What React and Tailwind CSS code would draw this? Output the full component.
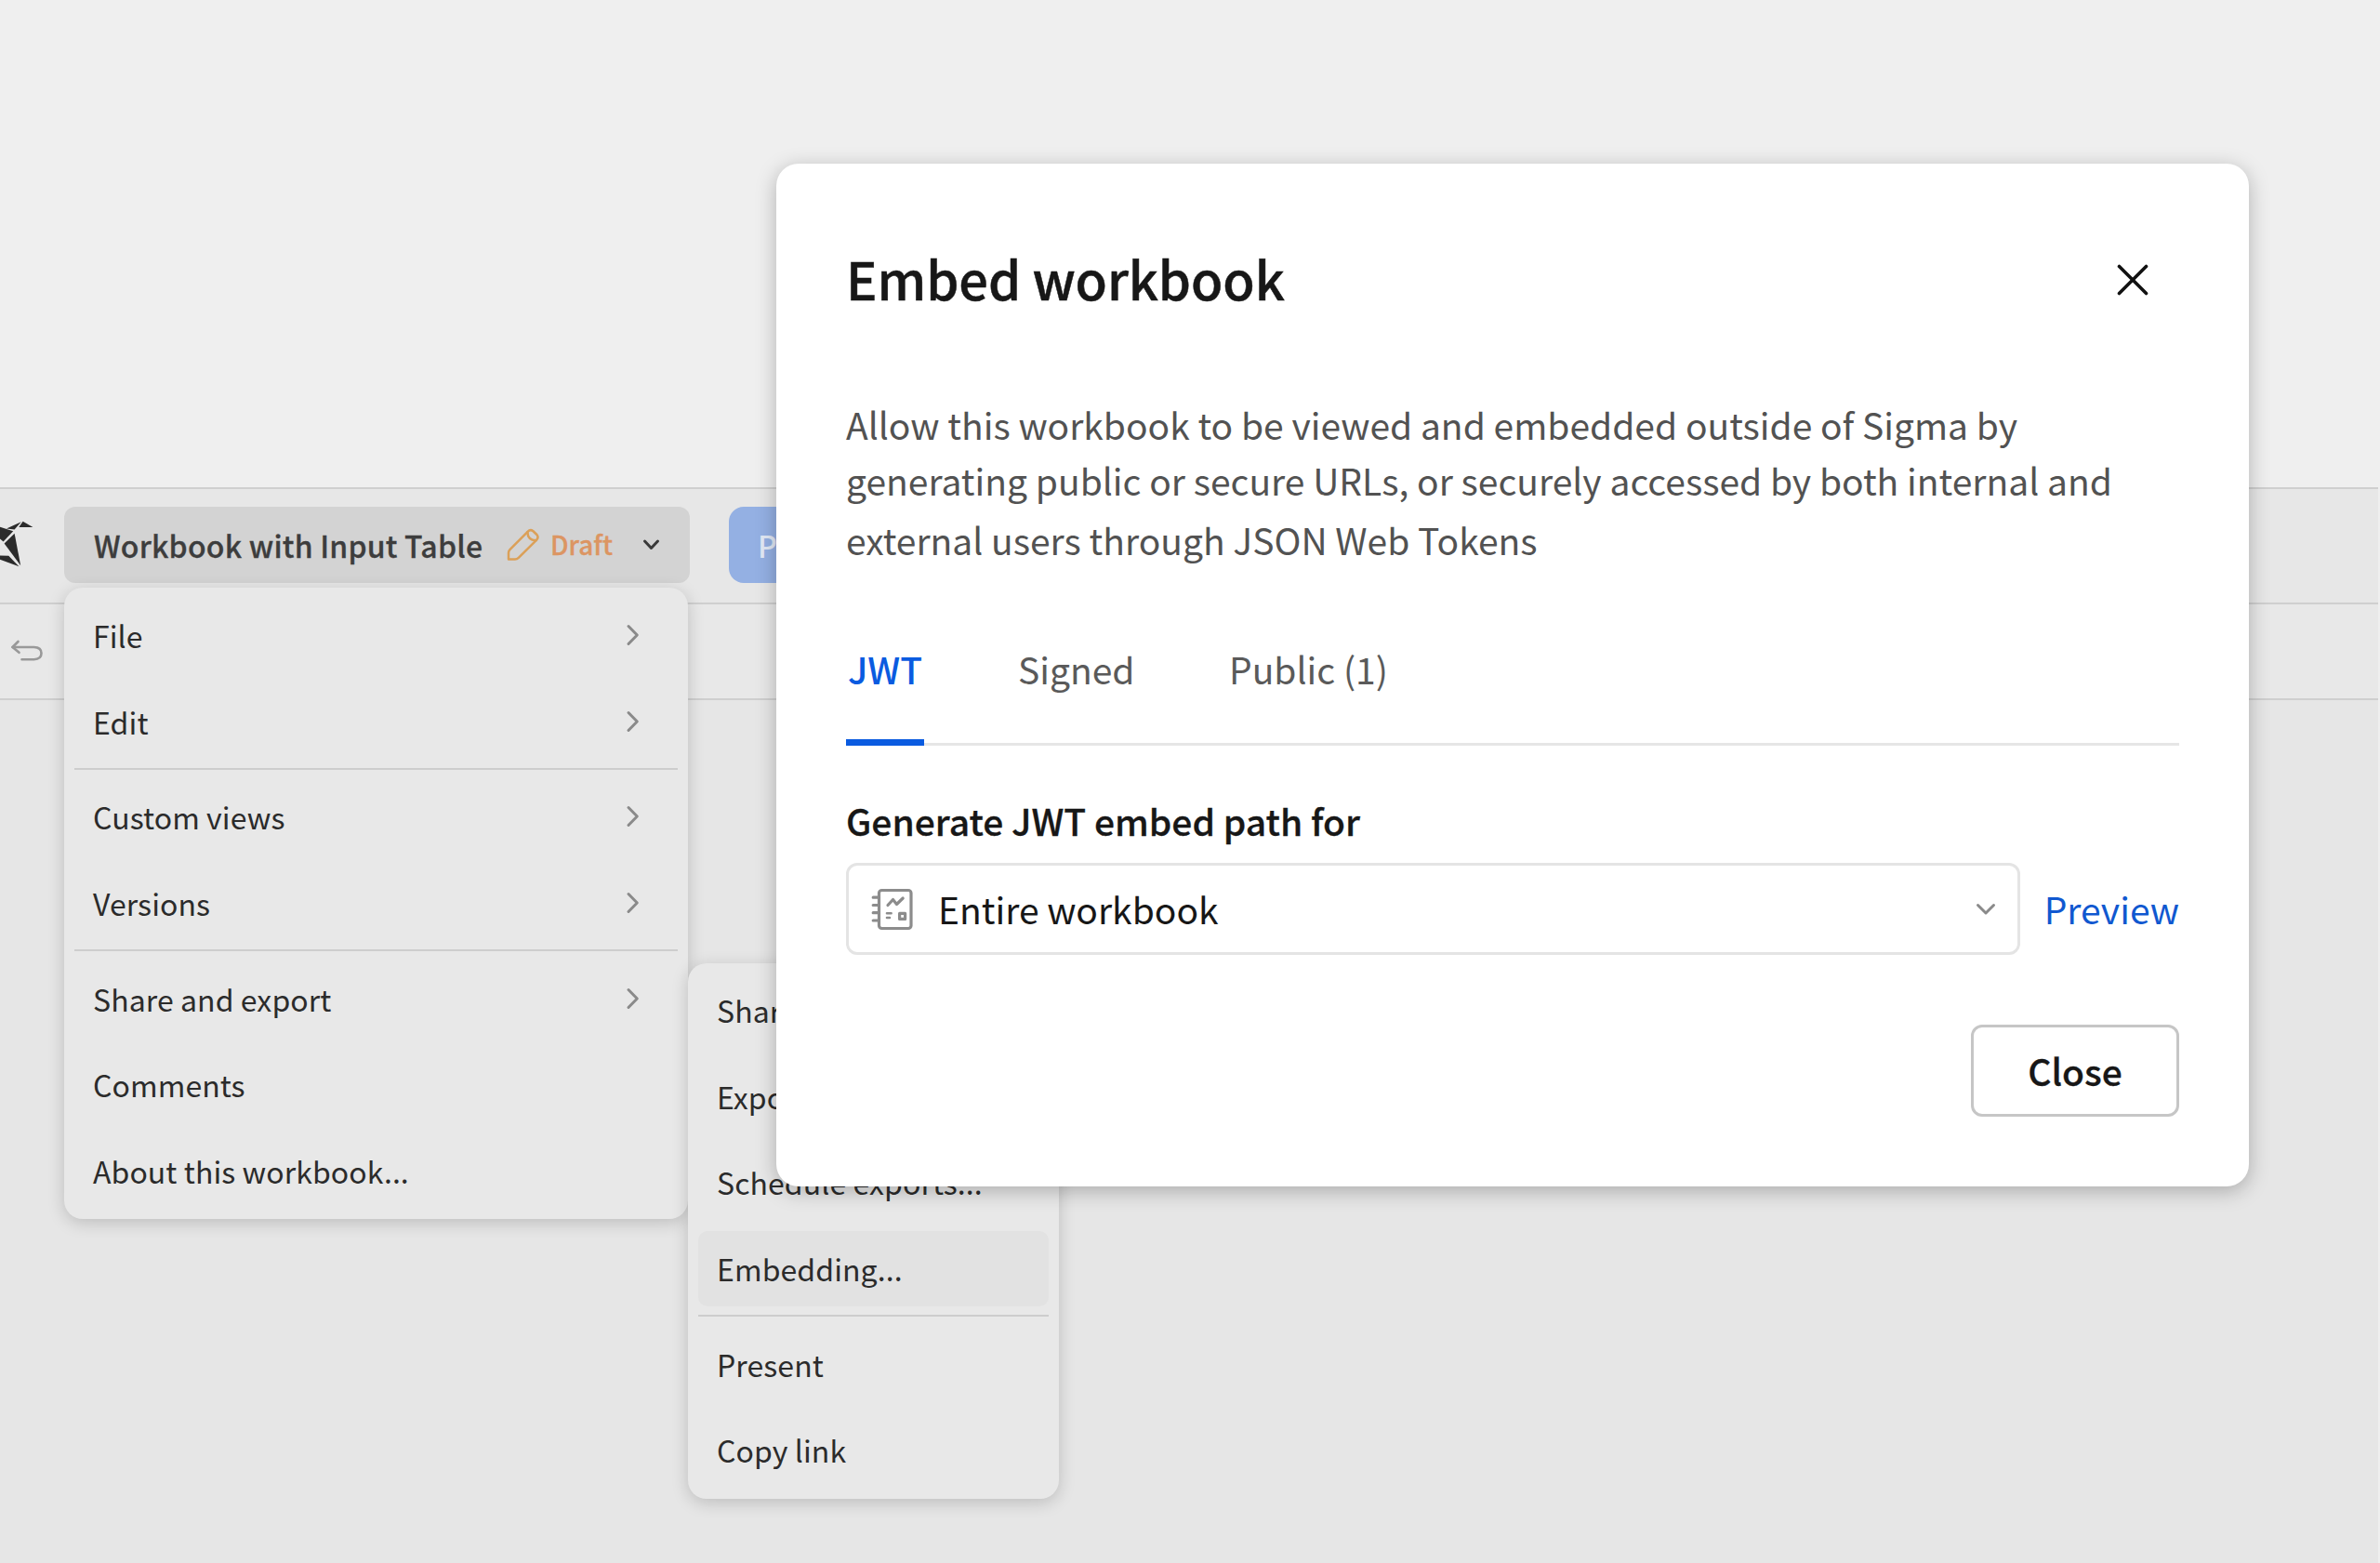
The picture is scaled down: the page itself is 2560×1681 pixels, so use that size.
const ink = "text-[#2b2b2b]";

function ChevronRight() {
  return (
    <svg className="h-[24px] w-[16px] shrink-0" viewBox="0 0 16 24" fill="none" stroke="#8a8a8a" strokeWidth="3" strokeLinecap="round" strokeLinejoin="round">
      <path d="M3 2.5 12.3 12 3 21.5" />
    </svg>
  );
}

function CraneLogo() {
  return (
    <svg className="h-[60px] w-[40px] shrink-0" viewBox="0 0 40 60" fill="#2b2b2b">
      <path d="M7 18.6 22.8 11.3 15.6 19.6Z" />
      <path d="M24.6 10.7 35.4 16.9 20.3 16.9Z" />
      <path d="M0 16.8 14.2 21.2 3.6 32.6 0 29.5Z" />
      <path d="M15.6 23.8 22.2 58.3 4.6 34.6Z" />
      <path d="M0 47.5 9.3 47.8 20.4 59.3 0 51.8Z" />
    </svg>
  );
}

function UndoIcon() {
  return (
    <svg className="h-[24px] w-[38px]" viewBox="0 0 38 24" fill="none" stroke="#999999" strokeWidth="2.6" strokeLinecap="round" strokeLinejoin="round">
      <path d="M8.5 2 2.5 8 9.5 13.8" />
      <path d="M2.5 8H25.5Q33.5 8.2 33.5 14.6T25.5 21.2H12.5" />
    </svg>
  );
}

function PencilIcon() {
  return (
    <svg className="h-[36px] w-[36px]" viewBox="0 0 36 36" fill="none" stroke="#dba058" strokeWidth="2.5" strokeLinecap="round" strokeLinejoin="round">
      <path d="M2 33.5V26.5Q2 24.5 3.4 23.1L22.6 3.8Q25.4 1 28.2 3L32.4 7Q34.8 9.8 32 12.8L12.8 31.8Q11 33.6 9 33.6Z" />
      <path d="M22.4 4.2Q22.6 12.8 31.4 13.2" />
    </svg>
  );
}

function WorkbookIcon() {
  return (
    <svg className="h-[46px] w-[46px] shrink-0" viewBox="0 0 46 46" fill="none" stroke="#8c8c8c" strokeWidth="3.2" strokeLinecap="round" strokeLinejoin="round">
      <rect x="8.5" y="2.5" width="34.5" height="41" rx="3" />
      <path d="M2.2 10.2H8M2.2 18.5H8M2.2 26.7H8M2.2 35H8" />
      <path d="M18 18.5 23.5 12.5 27.5 17.5 34.2 11" />
      <path d="M17 27.3H21.6M17 32H20" strokeWidth="2.6" />
      <rect x="30.6" y="27.4" width="6" height="6" />
    </svg>
  );
}

function MenuItem({ label, arrow, active }) {
  return (
    <div className="flex h-[92.6px] items-center px-[11px]">
      <div className={`flex h-[81px] flex-1 items-center justify-between rounded-[10px] pl-[20px] pr-[40px] ${active ? "bg-[#e2e2e2]" : ""}`}>
        <span className="whitespace-nowrap tracking-[0.08px]">{label}</span>
        {arrow && <ChevronRight />}
      </div>
    </div>
  );
}

function Separator() {
  return <div className="mx-[11px] my-[4px] h-[2px] bg-[#cdcdcd]" />;
}

function MainMenu() {
  return (
    <div className="absolute left-[69px] top-[632px] h-[679px] w-[671px] rounded-[20px] bg-[#e8e8e8] pt-[5px] shadow-[0_4px_18px_rgba(0,0,0,0.18)]">
      <MenuItem label="File" arrow />
      <MenuItem label="Edit" arrow />
      <Separator />
      <MenuItem label="Custom views" arrow />
      <MenuItem label="Versions" arrow />
      <Separator />
      <MenuItem label="Share and export" arrow />
      <MenuItem label="Comments" />
      <MenuItem label="About this workbook..." />
    </div>
  );
}

function SubMenu() {
  return (
    <div className="absolute left-[740px] top-[1036px] h-[576px] w-[399px] rounded-[20px] bg-[#e8e8e8] pt-[4px] shadow-[0_4px_18px_rgba(0,0,0,0.18)]">
      <MenuItem label="Share..." />
      <MenuItem label="Export..." />
      <MenuItem label="Schedule exports..." />
      <MenuItem label="Embedding..." active />
      <Separator />
      <MenuItem label="Present" />
      <MenuItem label="Copy link" />
    </div>
  );
}

function Modal() {
  return (
    <div className="absolute left-[835px] top-[176px] h-[1100px] w-[1584px] rounded-[24px] bg-white pl-[75px] pr-[75px] pt-[82px] text-[39px] leading-[60px] text-[#171717] shadow-[0_5px_22px_rgba(0,0,0,0.26)]">
      <div className="flex h-[82px] items-center justify-between pr-[32px]">
        <h1 className="text-[56px] font-medium leading-[82px] tracking-[-0.1px] [-webkit-text-stroke:0.5px_#171717]">Embed workbook</h1>
        <svg className="mt-[3px] h-[36px] w-[36px]" viewBox="0 0 36 36" fill="none" stroke="#111111" strokeWidth="3.6" strokeLinecap="round">
          <path d="M3.5 3.5 32.5 32.5M32.5 3.5 3.5 32.5" />
        </svg>
      </div>
      <div className="mt-[86px] whitespace-nowrap text-[#525252]">
        <p>Allow this workbook to be viewed and embedded outside of Sigma by</p>
        <p>generating public or secure URLs, or securely accessed by both internal and</p>
        <p className="pt-[4px]">external users through JSON Web Tokens</p>
      </div>
      <div className="mt-[79px] flex h-[113px] items-start border-b-[3px] border-[#e6e6e6] text-[#5a5a5a]">
        <div className="h-[113px] w-[84px] border-b-[7px] border-[#0a5be0] text-center font-medium text-[#0a5be0]">JWT</div>
        <div className="ml-[101px] w-[124px]">Signed</div>
        <div className="ml-[103px]">Public (1)</div>
      </div>
      <div className="mt-[50px] font-medium [-webkit-text-stroke:0.3px_#171717]">Generate JWT embed path for</div>
      <div className="mt-[16px] flex h-[99px] items-center justify-between">
        <div className="flex h-[99px] w-[1263px] items-center rounded-[12px] border-[3px] border-[#e4e4e4] pl-[24px] pr-[22px]">
          <WorkbookIcon />
          <span className="ml-[26px] flex-1 pb-[2px]">Entire workbook</span>
          <svg className="h-[14px] w-[24px]" viewBox="0 0 24 14" fill="none" stroke="#8a8a8a" strokeWidth="3" strokeLinecap="round" strokeLinejoin="round">
            <path d="M3.5 2.5 12 11 20.5 2.5" />
          </svg>
        </div>
        <span className="pb-[2px] text-[#1058d0]">Preview</span>
      </div>
      <div className="mt-[75px] flex justify-end">
        <div className="flex h-[99px] w-[224px] items-center justify-center rounded-[12px] border-[3px] border-[#c6c6c6] pb-[2px] font-medium [-webkit-text-stroke:0.3px_#171717]">Close</div>
      </div>
    </div>
  );
}

export default function App() {
  return (
    <div className={`relative flex h-[1681px] w-[2560px] flex-col overflow-hidden bg-[#efefef] font-['Noto_Sans_CJK_SC',sans-serif] text-[32px] leading-[46px] ${ink}`}>
      <div className="mt-[524px] flex flex-1 flex-col bg-[#e6e6e6] mr-[2px]">
        <header className="flex h-[126px] items-start border-y-[2px] border-[#cfcfcf] bg-[#e7e7e7] pt-[19px]">
          <div className="mt-[5px]">
            <CraneLogo />
          </div>
          <div className="ml-[29px] flex h-[82px] w-[673px] items-center rounded-[12px] bg-[#d3d3d3] pl-[32px]">
            <span className="w-[444px] whitespace-nowrap font-medium tracking-[0.2px] text-[#3d3d3d] [-webkit-text-stroke:0.3px_#3d3d3d]">Workbook with Input Table</span>
            <PencilIcon />
            <span className="ml-[11px] w-[96px] pb-[2px] text-[28px] font-medium text-[#dc9562] [-webkit-text-stroke:0.3px_#dc9562]">Draft</span>
            <svg className="h-[14px] w-[24px]" viewBox="0 0 24 14" fill="none" stroke="#3a3a3a" strokeWidth="3" strokeLinecap="round" strokeLinejoin="round">
              <path d="M5.5 3 12.5 10.5 19.5 3" />
            </svg>
          </div>
          <div className="ml-[42px] flex h-[82px] w-[180px] items-center rounded-[16px] bg-[#94b0e3] pl-[31px] font-medium text-[#e2e9f5]">P</div>
        </header>
        <div className="flex h-[103px] items-center border-b-[2px] border-[#cfcfcf] bg-[#e8e8e8] pb-[2px] pl-[11px]">
          <UndoIcon />
        </div>
      </div>
      <MainMenu />
      <SubMenu />
      <Modal />
    </div>
  );
}
